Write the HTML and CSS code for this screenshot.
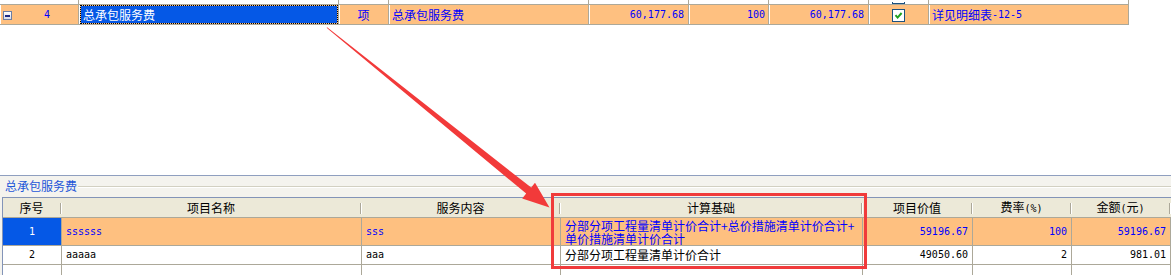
FILE: index.html
```html
<!DOCTYPE html>
<html>
<head>
<meta charset="utf-8">
<link rel="stylesheet" href="styles.css">
</head>
<body>
<div class="page">
  <div class="top">
    <div class="trow r0">
      <div class="c w1"></div>
      <div class="c w2"></div>
      <div class="c w3"></div>
      <div class="c w4"></div>
      <div class="c w5"></div>
      <div class="c w6"></div>
      <div class="c w7"></div>
      <div class="c w8 center"><span class="chk-top"></span></div>
      <div class="c w9"></div>
    </div>
    <div class="trow r1">
      <div class="c w1 first"><span class="tog"><span class="minus"></span></span><span class="n num">4</span></div>
      <div class="c w2 selcell"><div class="sel">总承包服务费</div></div>
      <div class="c w3 center">项</div>
      <div class="c w4">总承包服务费</div>
      <div class="c w5 right"><span class="num">60,177.68</span></div>
      <div class="c w6 right"><span class="num">100</span></div>
      <div class="c w7 right"><span class="num">60,177.68</span></div>
      <div class="c w8 center">
        <span class="chk"><svg width="11" height="11" viewBox="0 0 11 11"><path d="M2.5 5.2 L4.6 7.6 L8.6 3" fill="none" stroke="#1fa01f" stroke-width="2"/></svg></span>
      </div>
      <div class="c w9">详见明细表<span class="num">-12-5</span></div>
    </div>
  </div>

  <div class="blank"></div>

  <div class="panel">
    <div class="legend"><span class="ltitle">总承包服务费</span><span class="lline"></span></div>
    <div class="grid">
      <div class="h"><span class="hl">序号</span><span class="sep"></span></div>
      <div class="h"><span class="hl">项目名称</span><span class="sep"></span></div>
      <div class="h"><span class="hl">服务内容</span><span class="sep"></span></div>
      <div class="h"><span class="hl">计算基础</span><span class="sep"></span></div>
      <div class="h"><span class="hl">项目价值</span><span class="sep"></span></div>
      <div class="h"><span class="hl">费率<span class="hnum">(%)</span></span><span class="sep"></span></div>
      <div class="h"><span class="hl">金额<span class="hnum">(</span>元<span class="hnum">)</span></span><span class="sep"></span></div>

      <div class="d a1 center selblue"><span class="num">1</span></div>
      <div class="d a1 blue"><span class="num">ssssss</span></div>
      <div class="d a1 blue"><span class="num">sss</span></div>
      <div class="d a1 blue wrap"><span class="ln">分部分项工程量清单计价合计+总价措施清单计价合计+</span><span class="ln">单价措施清单计价合计</span></div>
      <div class="d a1 blue right"><span class="num">59196.67</span></div>
      <div class="d a1 blue right"><span class="num">100</span></div>
      <div class="d a1 blue right"><span class="num">59196.67</span></div>

      <div class="d a2 center"><span class="num">2</span></div>
      <div class="d a2"><span class="num">aaaaa</span></div>
      <div class="d a2"><span class="num">aaa</span></div>
      <div class="d a2">分部分项工程量清单计价合计</div>
      <div class="d a2 right"><span class="num">49050.60</span></div>
      <div class="d a2 right"><span class="num">2</span></div>
      <div class="d a2 right"><span class="num">981.01</span></div>

      <div class="d a3"></div>
      <div class="d a3"></div>
      <div class="d a3"></div>
      <div class="d a3"></div>
      <div class="d a3"></div>
      <div class="d a3"></div>
      <div class="d a3"></div>
    </div>
  </div>

  <svg class="arrow" width="1171" height="275" viewBox="0 0 1171 275">
    <polygon points="326.5,26.8 531.2,187.6 535.0,182.8 549.5,207.5 522.2,198.6 526.2,193.6 327.4,28.4" fill="#f23a3a"/>
  </svg>
  <div class="redbox"></div>
</div>
</body>
</html>
```

FILE: styles.css
```css
html, body {
  margin: 0;
  padding: 0;
  background: #ffffff;
}

.page {
  position: relative;
  width: 1171px;
  height: 275px;
  overflow: hidden;
  font-family: "Noto Sans CJK SC", "Liberation Sans", sans-serif;
  font-size: 12px;
  color: #000;
}

.num {
  font-family: "DejaVu Sans Mono", "Liberation Mono", monospace;
  font-size: 10px;
}

/* ---------- top grid ---------- */
.top {
  width: 1129px;
  display: flex;
  flex-direction: column;
}

.trow {
  display: flex;
}

.c {
  box-sizing: border-box;
  border-right: 1px solid #aca899;
  box-shadow: inset 1px 0 0 #ffffff;
  display: flex;
  align-items: center;
  padding: 0 3px;
  white-space: nowrap;
  overflow: hidden;
}

.w1 { width: 79px; }
.w2 { width: 260px; }
.w3 { width: 50px; }
.w4 { width: 200px; }
.w5 { width: 100px; }
.w6 { width: 80px; }
.w7 { width: 100px; }
.w8 { width: 60px; }
.w9 { width: 200px; }

.center { justify-content: center; }
.right { justify-content: flex-end; }

.r0 .c {
  height: 5px;
  border-bottom: 1px solid #aca899;
  align-items: flex-end;
}

.chk-top {
  width: 13px;
  height: 2px;
  box-sizing: border-box;
  border: 1px solid #1c5180;
  border-top: none;
  background: #fff;
}

.r1 .c {
  height: 20px;
  border-bottom: 1px solid #aca899;
  background: #fec080;
  color: #0000ff;
  line-height: 19px;
}

.r1 .c.w1 { padding: 0 0 0 3px; }

.tog {
  box-sizing: border-box;
  width: 9px;
  height: 9px;
  border: 1px solid #6b7ea5;
  background: linear-gradient(#ffffff, #d9dcea);
  display: flex;
  align-items: center;
  justify-content: center;
  margin-top: 2px;
}

.minus {
  width: 5px;
  height: 2px;
  background: #1c2a84;
}

.n {
  flex: 1;
  text-align: center;
  padding-left: 4px;
}

.r1 .selcell {
  padding: 0 0 0 1px;
  align-items: stretch;
}

.sel {
  flex: 1;
  box-sizing: border-box;
  border: 1px dotted #000;
  background: #0558e6;
  background-clip: padding-box;
  color: #fff;
  padding-left: 2px;
  line-height: 17px;
}

.chk {
  box-sizing: border-box;
  width: 13px;
  height: 13px;
  border: 1px solid #1c5180;
  background: #fff;
  display: flex;
  margin-top: 1px;
}

.r1 .w5 { padding-right: 4px; }
.r1 .w7 { padding-right: 4px; }

/* ---------- gap ---------- */
.blank {
  height: 150px;
}

/* ---------- lower panel ---------- */
.panel {
  border-top: 1px solid #8f9fbf;
  background: #f4f3ee;
  height: 100px;
}

.legend {
  height: 21px;
  display: flex;
  align-items: center;
}

.ltitle {
  color: #1e56d8;
  padding-left: 5px;
  padding-right: 1px;
  line-height: 14px;
  margin-top: -1px;
}

.lline {
  flex: 1;
  height: 0;
  border-top: 1px solid #d2d0c2;
  border-bottom: 1px solid #ffffff;
  margin-top: 1px;
}

.grid {
  margin-left: 2px;
  border-top: 1px solid #8394b8;
  border-left: 1px solid #8394b8;
  background: #ffffff;
  display: grid;
  grid-template-columns: 59px 300px 199px 302px 110px 99px 99px;
  grid-template-rows: 20px 28px 19px 20px;
}

.h {
  background: #ece9d8;
  border-bottom: 1px solid #aca899;
  display: flex;
  align-items: center;
  box-sizing: border-box;
}

.hl {
  flex: 1;
  text-align: center;
  line-height: 19px;
}

.hnum {
  font-family: "DejaVu Sans Mono", "Liberation Mono", monospace;
  font-size: 10px;
}

.sep {
  width: 0;
  height: 11px;
  border-left: 1px solid #aca899;
  border-right: 1px solid #ffffff;
  margin-top: 1px;
}

.d {
  box-sizing: border-box;
  border-right: 1px solid #aca899;
  border-bottom: 1px solid #aca899;
  display: flex;
  align-items: center;
  padding: 0 4px;
  white-space: nowrap;
  overflow: hidden;
}

.d.right { justify-content: flex-end; padding-right: 4px; }
.d.center { justify-content: center; padding: 0; }

.a1 {
  background: #fec080;
}

.blue {
  color: #0000ff;
}

.selblue {
  background: #0558e6;
  color: #ffffff;
}

.wrap {
  flex-direction: column;
  align-items: flex-start;
  justify-content: center;
  overflow: visible;
}

.ln {
  display: block;
  line-height: 13px;
}

.a2 {
  background: #ffffff;
  line-height: 18px;
}

.a3 {
  border-bottom: none;
}

/* ---------- annotations ---------- */
.arrow {
  position: absolute;
  left: 0;
  top: 0;
  pointer-events: none;
}

.redbox {
  position: absolute;
  left: 551px;
  top: 193px;
  width: 316px;
  height: 76px;
  box-sizing: border-box;
  border: 3px solid #f03b3b;
  pointer-events: none;
}
```
